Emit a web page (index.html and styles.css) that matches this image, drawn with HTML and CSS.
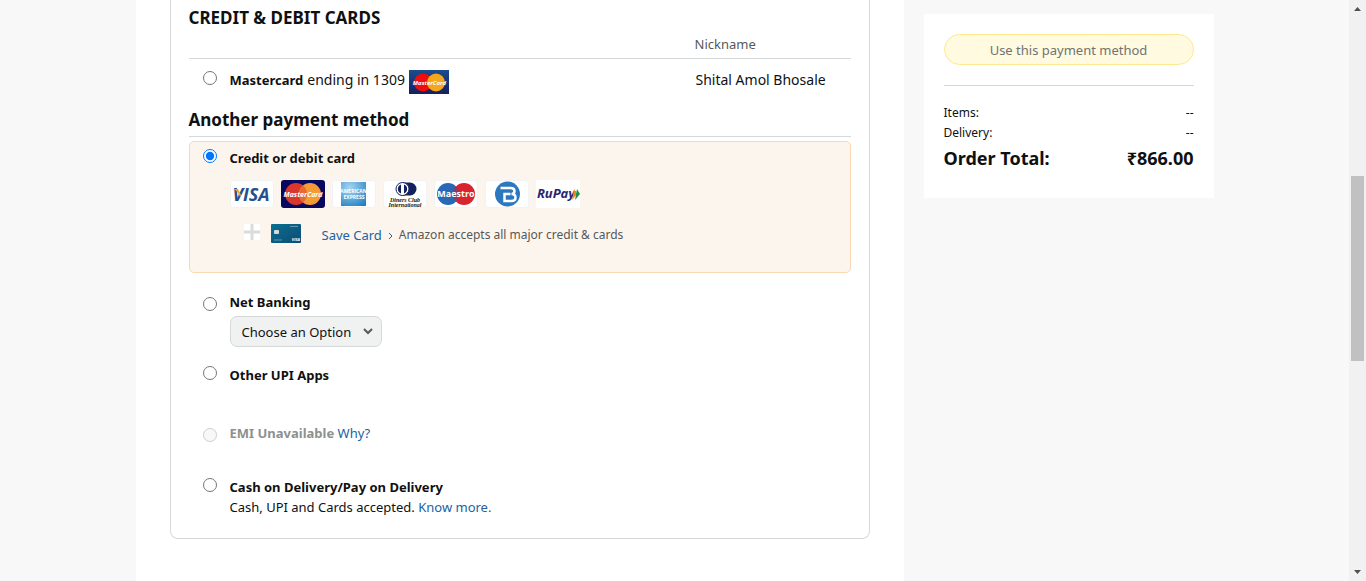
FILE: index.html
```
<!DOCTYPE html>
<html lang="en">
<head>
<meta charset="utf-8">
<meta name="viewport" content="width=device-width, initial-scale=1">
<title>Select a payment method</title>
<link rel="stylesheet" href="styles.css">
</head>
<body>
<div class="shell">
  <div class="page">
    <main class="content">
      <form class="panel" id="payment">
        <h2 class="heading">CREDIT &amp; DEBIT CARDS</h2>
        <table class="cards">
          <thead>
            <tr><td></td><th scope="col" class="nick-head">Nickname</th></tr>
          </thead>
          <tbody>
            <tr>
              <td>
                <div class="option saved">
                  <input class="radio" type="radio" name="method" id="saved">
                  <label class="saved-label" for="saved"><b>Mastercard</b> <span class="ending">ending in 1309</span>
                    <svg class="saved-logo" viewBox="0 0 40 24" role="img" aria-label="Mastercard logo">
                      <defs><linearGradient id="navy" x2="0" y2="1"><stop stop-color="#1b4c8c"/><stop offset="1" stop-color="#15205f"/></linearGradient></defs>
                      <rect width="40" height="24" fill="url(#navy)"/>
                      <circle cx="14" cy="12.500" r="9" fill="#f00d0d"/>
                      <circle cx="27" cy="12.500" r="9" fill="#f5a71c"/>
                      <text x="20.500" y="15" class="mark mark-mc-small">MasterCard</text>
                    </svg>
                  </label>
                </div>
              </td>
              <td class="nick">Shital Amol Bhosale</td>
            </tr>
          </tbody>
        </table>

        <h2 class="heading ruled">Another payment method</h2>

        <section class="option selected">
          <input class="radio" type="radio" name="method" id="card" checked>
          <div>
            <label class="name" for="card">Credit or debit card</label>
            <div class="logos">
              <svg viewBox="0 0 44 28" role="img" aria-label="Visa">
                <rect class="chip" x=".5" y=".5" width="43" height="27" rx="3"/>
                <text x="21" y="21" class="mark mark-visa">VISA</text>
                <path d="M3 9h5l3 6-1 2C9 13 6 10 3 9Z" fill="#e5a72d"/>
              </svg>
              <svg viewBox="0 0 44 28" role="img" aria-label="Mastercard">
                <rect width="44" height="28" rx="3" fill="#08085f"/>
                <circle cx="15" cy="14" r="11" fill="#d9372c"/>
                <circle cx="29" cy="14" r="11" fill="#f49b35"/>
                <path d="M22 5.500a11 11 0 0 1 0 17a11 11 0 0 1 0-17Z" fill="#e66b2e"/>
                <text x="22" y="17" class="mark mark-mc">MasterCard</text>
              </svg>
              <svg viewBox="0 0 44 28" role="img" aria-label="American Express">
                <defs><radialGradient id="amex" cx=".35" cy=".25" r=".9"><stop stop-color="#a6d6f2"/><stop offset="1" stop-color="#237fc2"/></radialGradient></defs>
                <rect class="chip" x=".5" y=".5" width="43" height="27" rx="3"/>
                <rect x="9" y="2" width="25" height="24" fill="url(#amex)"/>
                <text x="21.500" y="13" class="mark mark-amex">AMERICAN</text>
                <text x="22" y="19" class="mark mark-amex">EXPRESS</text>
              </svg>
              <svg viewBox="0 0 44 28" role="img" aria-label="Diners Club International">
                <rect class="chip" x=".5" y=".5" width="43" height="27" rx="3"/>
                <path d="M19 2.500h8a6.500 6.500 0 0 1 0 13h-8Z" fill="#14215e"/>
                <circle cx="19.500" cy="9" r="6.500" fill="#fff" stroke="#14215e"/>
                <path d="M18 4.500a4.800 4.800 0 0 0 0 9ZM21 4.500a4.800 4.800 0 0 1 0 9Z" fill="#14215e"/>
                <text x="22" y="21.500" class="mark mark-diners">Diners Club</text>
                <text x="22" y="26.500" class="mark mark-diners">International</text>
              </svg>
              <svg viewBox="0 0 44 28" role="img" aria-label="Maestro">
                <rect class="chip" x=".5" y=".5" width="43" height="27" rx="3"/>
                <circle cx="14" cy="14" r="11" fill="#2868b4"/>
                <circle cx="30" cy="14" r="11" fill="#d9232e"/>
                <path d="M22 6.500a11 11 0 0 1 0 15a11 11 0 0 1 0-15Z" fill="#7a426f"/>
                <text x="22" y="17" class="mark mark-maestro">Maestro</text>
              </svg>
              <svg viewBox="0 0 44 28" role="img" aria-label="Bajaj Finserv">
                <rect class="chip" x=".5" y=".5" width="43" height="27" rx="3"/>
                <circle cx="22.500" cy="14" r="12.500" fill="#2c78be"/>
                <path d="M15.500 8h10q4 0 4 3t-3 3q4 0 4 3.500t-4 3.500h-7v-7h6" fill="none" stroke="#fff" stroke-width="2.500"/>
              </svg>
              <svg viewBox="0 0 44 28" role="img" aria-label="RuPay">
                <rect width="46" height="28" fill="#fff"/>
                <text x="20" y="18" class="mark mark-rupay">RuPay</text>
                <path d="m38 9 3 5-5 6Z" fill="#f58220"/>
                <path d="m41 9 3 5-5 6Z" fill="#16934d"/>
              </svg>
            </div>
            <div class="add-card">
              <svg class="plus" viewBox="0 0 16 16" aria-hidden="true"><rect width="16" height="16" fill="#fff"/><path d="M8 0v16M0 8h16" stroke="#dcdcdc" stroke-width="3"/></svg>
              <svg class="mini-card" viewBox="0 0 30 20" aria-hidden="true">
                <defs><linearGradient id="teal" x2="1" y2="1"><stop stop-color="#08708f"/><stop offset="1" stop-color="#104a75"/></linearGradient></defs>
                <rect width="30" height="19" rx="1" fill="url(#teal)"/>
                <rect x="3" y="6" width="5" height="4" rx="1" fill="#d6dada"/>
                <path d="M19 2.500h8M3 16h8" stroke="#6595b2"/>
                <text x="25" y="17" class="mark mark-mini">VISA</text>
              </svg>
              <a class="save" href="#save">Save Card</a>
              <svg class="arrow" viewBox="0 0 5 8" aria-hidden="true"><path d="m1 1 3 3-3 3" fill="none" stroke="#2162a1"/></svg>
              <span class="hint">Amazon accepts all major credit &amp; cards</span>
            </div>
          </div>
        </section>

        <section class="option netbank">
          <input class="radio low" type="radio" name="method" id="net">
          <div>
            <label class="name" for="net">Net Banking</label>
            <div class="select-wrap">
              <select class="bank" aria-label="Choose a bank"><option>Choose an Option</option></select>
              <svg class="chevron" viewBox="0 0 10 7" aria-hidden="true"><path d="m1 1 4 4 4-4" fill="none" stroke="#565959" stroke-width="2"/></svg>
            </div>
          </div>
        </section>

        <section class="option upi">
          <input class="radio" type="radio" name="method" id="upi">
          <label class="name" for="upi">Other UPI Apps</label>
        </section>

        <section class="option emi">
          <input class="radio low" type="radio" name="method" id="emi" disabled>
          <div><label class="name muted" for="emi">EMI Unavailable</label> <a href="#why">Why?</a></div>
        </section>

        <section class="option cod">
          <input class="radio" type="radio" name="method" id="cod">
          <div>
            <label class="name" for="cod">Cash on Delivery/Pay on Delivery</label>
            <p class="note">Cash, UPI and Cards accepted. <a href="#more">Know more.</a></p>
          </div>
        </section>
      </form>
    </main>

    <aside class="summary">
      <button class="use" type="submit" form="payment" disabled>Use this payment method</button>
      <dl class="totals">
        <div class="line"><dt>Items:</dt><dd>--</dd></div>
        <div class="line"><dt>Delivery:</dt><dd>--</dd></div>
        <div class="line total"><dt>Order Total:</dt><dd>₹866.00</dd></div>
      </dl>
    </aside>
  </div>

  <div class="scrollbar" aria-hidden="true">
    <svg viewBox="0 0 17 17"><path d="M5 11h7L8.500 7Z" fill="#505050"/></svg>
    <div class="track"><div class="thumb"></div></div>
    <svg viewBox="0 0 17 17"><path d="M5 6h7l-3.500 4Z" fill="#505050"/></svg>
  </div>
</div>
</body>
</html>
```
FILE: styles.css
```
* { box-sizing: border-box; }
body {
  margin: 0;
  background: #f8f8f8;
  color: #0f1111;
  font: 13px/20px "Noto Sans", "Open Sans", sans-serif;
}
h2, p, dl, dd { margin: 0; }
a { color: #2162a1; text-decoration: none; }
a:hover { text-decoration: underline; }

.shell { display: flex; align-items: flex-start; }
.page {
  flex: 1;
  display: flex;
  align-items: flex-start;
  gap: 20px;
  max-width: 1078px;
  margin: 0 auto;
}
.content { flex: 1; min-height: 100vh; padding: 0 34px 42px; background: #fff; }
.panel {
  padding: 6px 18px 21px;
  border: 1px solid #d5d9d9;
  border-top: 0;
  border-radius: 0 0 8px 8px;
}

.heading { font-size: 17px; line-height: 24px; font-weight: 700; }
.ruled { padding: 6px 0 4px; margin-bottom: 4px; border-bottom: 1px solid #d5d9d9; }

.cards { width: 100%; border-collapse: collapse; table-layout: fixed; }
.cards th, .cards td { padding: 0; text-align: left; vertical-align: top; }
.cards thead { border-bottom: 1px solid #d5d9d9; }
.cards .nick-head { width: 156px; padding: 4px 0; font-weight: 400; color: #565959; }
.cards .nick { padding: 11px 0 0 1px; font-size: 14px; }

.option { display: grid; grid-template-columns: 27px 1fr; padding-left: 14px; }
.radio { width: 14px; height: 14px; margin: 1px 0 0; }
.radio.low { margin-top: 5px; }
.name { font-weight: 700; }
.muted { color: #8d9090; }

.saved { padding-top: 11px; padding-bottom: 8px; }
.saved-label { display: flex; gap: 4px; height: 24px; }
.saved-logo { width: 40px; height: 24px; }
.ending { font-size: 14px; }

.selected {
  padding: 6px 13px 27px;
  background: #fcf5ee;
  border: 1px solid #fbd8b4;
  border-radius: 5px;
}
.logos { display: flex; gap: 7px; margin: 12px 0 15px; }
.logos svg { width: 44px; height: 28px; }
.chip { fill: #fff; stroke: #f0f2f3; }
.add-card { display: flex; align-items: flex-start; }
.plus { width: 16px; height: 16px; margin: 1px 11px 0 14px; }
.mini-card { width: 30px; height: 20px; margin: 1px 21px 0 0; }
.save { margin-top: 2px; }
.arrow { width: 5px; height: 8px; margin: 9px 6px 0 6px; }
.hint { margin-top: 2px; font-size: 12px; color: #565959; }

.netbank { padding-top: 19px; }
.select-wrap { position: relative; width: 152px; margin-top: 4px; }
.bank {
  appearance: none;
  display: block;
  width: 100%;
  height: 31px;
  padding: 0 24px 0 11px;
  font: inherit;
  color: #0f1111;
  background: #f0f2f2;
  border: 1px solid #d5d9d9;
  border-radius: 7px;
}
.chevron { position: absolute; right: 9px; top: 12px; width: 10px; height: 7px; pointer-events: none; }
.upi { padding-top: 18px; }
.emi { padding-top: 38px; }
.cod { padding-top: 34px; }

.summary { width: 290px; margin-top: 14px; padding: 20px 20px 28px; background: #fff; }
.use {
  display: block;
  width: 100%;
  height: 31px;
  font: inherit;
  color: #6f7373;
  background: #fffae0;
  border: 1px solid #ffe98f;
  border-radius: 16px;
}
.totals { margin-top: 20px; padding-top: 17px; border-top: 1px solid #d5d9d9; }
.line { display: flex; justify-content: space-between; font-size: 12px; }
.total { padding-top: 3px; font-size: 18px; line-height: 24px; font-weight: 700; }

.scrollbar {
  position: sticky;
  top: 0;
  display: flex;
  flex-direction: column;
  width: 17px;
  height: 100vh;
  background: #f1f1f1;
}
.scrollbar svg { width: 17px; height: 17px; }
.track { flex: 1; padding: 159px 2px 0; }
.thumb { height: 34%; min-height: 185px; background: #c1c1c1; }

.mark { text-anchor: middle; font-family: "Open Sans", sans-serif; font-weight: 700; font-style: italic; fill: #fff; }
.mark-mc-small { font-size: 6px; }
.mark-visa { font-size: 18px; fill: #24508c; }
.mark-mc { font-size: 7px; }
.mark-amex { font-size: 5px; font-style: normal; }
.mark-diners { font-family: "Liberation Serif", serif; font-size: 6px; fill: #111; }
.mark-maestro { font-size: 9px; font-style: normal; }
.mark-rupay { font-size: 13px; fill: #29266f; }
.mark-mini { font-size: 4px; }
```
